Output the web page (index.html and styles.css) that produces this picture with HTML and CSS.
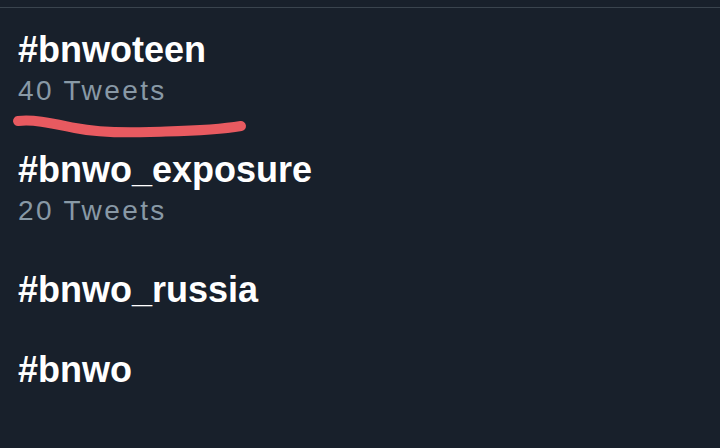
FILE: index.html
```html
<!DOCTYPE html>
<html>
<head>
<meta charset="utf-8">
<link rel="stylesheet" href="styles.css">
</head>
<body>
<div class="topbar"></div>
<ul class="list">
  <li class="row">
    <div class="tag">#bnwoteen</div>
    <div class="count">40 Tweets</div>
    <svg class="scribble" width="260" height="35" viewBox="0 0 260 35">
      <path d="M18 11 C 35 9, 55 14, 75 18 C 95 22, 120 23, 150 22 C 180 21, 212 21, 241 16" fill="none" stroke="#e85a60" stroke-width="10" stroke-linecap="round" stroke-linejoin="round"/>
    </svg>
  </li>
  <li class="row">
    <div class="tag">#bnwo_exposure</div>
    <div class="count">20 Tweets</div>
  </li>
  <li class="row">
    <div class="tag">#bnwo_russia</div>
  </li>
  <li class="row">
    <div class="tag">#bnwo</div>
  </li>
</ul>
</body>
</html>
```
FILE: styles.css
```css
html, body {
  margin: 0;
  padding: 0;
  background: #18202b;
  width: 720px;
  height: 448px;
  overflow: hidden;
  font-family: "Liberation Sans", Arial, sans-serif;
}
.topbar {
  height: 7px;
  border-bottom: 1px solid #3a444e;
}
.list {
  list-style: none;
  margin: 0;
  padding: 2px 0 0 0;
}
.row {
  position: relative;
  padding: 20px 18px;
}
.tag {
  color: #ffffff;
  font-weight: 700;
  font-size: 36px;
  line-height: 40px;
}
.count {
  color: #8899a6;
  font-size: 28px;
  line-height: 40px;
  letter-spacing: 2.4px;
  padding-top: 1px;
  margin-bottom: -1px;
}
.scribble {
  position: absolute;
  left: 0;
  top: 100px;
}
```
